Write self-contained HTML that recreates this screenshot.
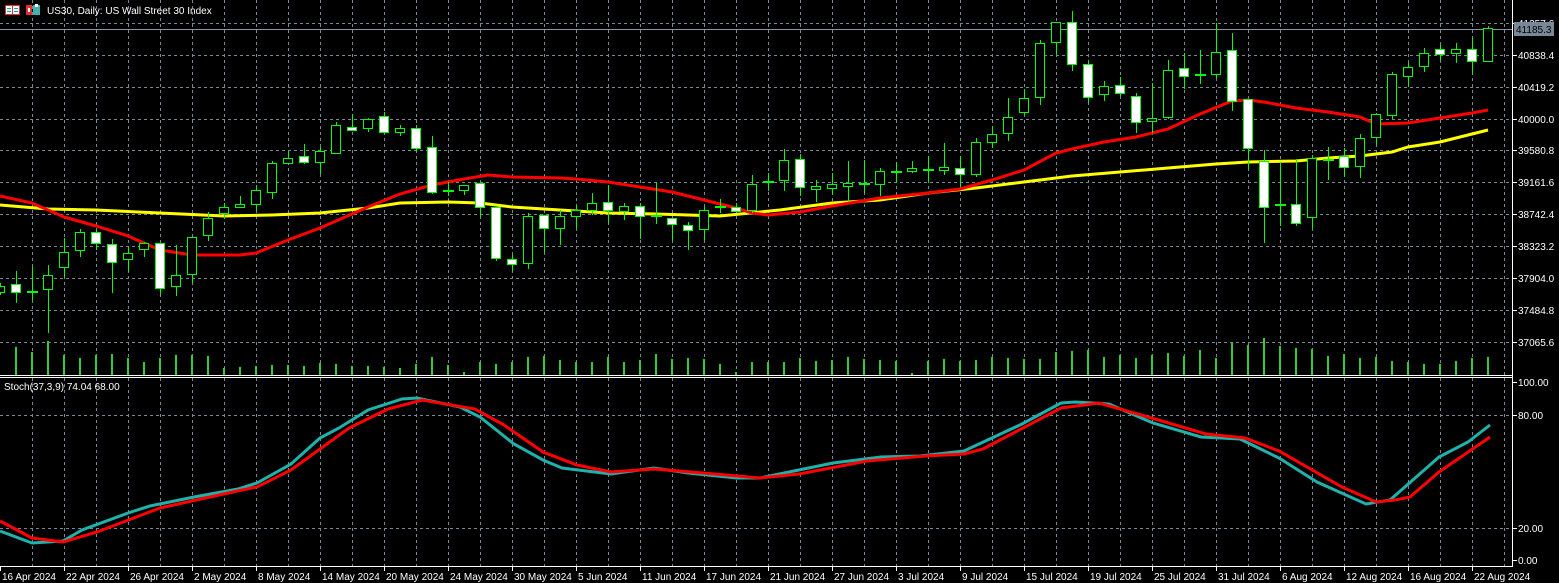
<!DOCTYPE html>
<html><head><meta charset="utf-8"><style>
html,body{margin:0;padding:0;background:#000;overflow:hidden}
svg{display:block}
text{font-family:"Liberation Sans","DejaVu Sans",sans-serif;font-size:10px;fill:#fff}
</style></head><body>
<svg width="1559" height="583" viewBox="0 0 1559 583" xmlns="http://www.w3.org/2000/svg" shape-rendering="crispEdges">
<defs>
<pattern id="vg" x="0" y="0" width="32" height="6" patternUnits="userSpaceOnUse"><rect x="0" y="0" width="1" height="3" fill="#778899"/></pattern>
</defs>
<rect width="1559" height="583" fill="#000"/>
<rect x="32" y="0" width="1474" height="375" fill="url(#vg)"/>
<rect x="32" y="378" width="1474" height="188" fill="url(#vg)"/>
<g stroke="#778899" stroke-width="1" stroke-dasharray="3,3">
<line x1="0" x2="1512" y1="23.5" y2="23.5"/>
<line x1="0" x2="1512" y1="55.5" y2="55.5"/>
<line x1="0" x2="1512" y1="87.5" y2="87.5"/>
<line x1="0" x2="1512" y1="119.5" y2="119.5"/>
<line x1="0" x2="1512" y1="150.5" y2="150.5"/>
<line x1="0" x2="1512" y1="182.5" y2="182.5"/>
<line x1="0" x2="1512" y1="214.5" y2="214.5"/>
<line x1="0" x2="1512" y1="246.5" y2="246.5"/>
<line x1="0" x2="1512" y1="278.5" y2="278.5"/>
<line x1="0" x2="1512" y1="310.5" y2="310.5"/>
<line x1="0" x2="1512" y1="342.5" y2="342.5"/>
<line x1="0" x2="1512" y1="415.5" y2="415.5"/>
<line x1="0" x2="1512" y1="528.5" y2="528.5"/>
</g>
<line x1="0" x2="1512" y1="29.5" y2="29.5" stroke="#8797a8"/>
<g stroke="#32cd32" stroke-width="2">
<path d="M16 347V375M32 352V375M48 341V375M64 355V375M80 358V375M96 355V375M112 354V375M128 358V375M144 362V375M160 358V375M176 355V375M192 355V375M208 356V375M224 368V375M240 367V375M256 366V375M272 365V375M288 365V375M304 366V375M320 363V375M336 364V375M352 366V375M368 366V375M384 367V375M400 368V375M416 364V375M432 357V375M448 365V375M464 372V375M480 362V375M496 364V375M512 362V375M528 357V375M544 356V375M560 360V375M576 362V375M592 362V375M608 357V375M624 362V375M640 360V375M656 354V375M672 359V375M688 358V375M704 359V375M720 364V375M736 372V375M752 362V375M768 362V375M784 362V375M800 358V375M816 361V375M832 360V375M848 357V375M864 359V375M880 360V375M896 361V375M912 373V375M928 361V375M944 359V375M960 361V375M976 360V375M992 357V375M1008 358V375M1024 359V375M1040 359V375M1056 352V375M1072 351V375M1088 350V375M1104 357V375M1120 355V375M1136 358V375M1152 355V375M1168 353V375M1184 356V375M1200 350V375M1216 358V375M1232 343V375M1248 345V375M1264 338V375M1280 346V375M1296 348V375M1312 349V375M1328 356V375M1344 354V375M1360 358V375M1376 357V375M1392 361V375M1408 362V375M1424 364V375M1440 364V375M1456 361V375M1472 358V375M1488 357V375"/>
</g>
<polyline fill="none" stroke="#ffff00" stroke-width="3" shape-rendering="auto" points="0,205 48,209 96,210 160,213 224,216 272,215 320,213 368,208 400,203 448,202 480,203 512,207 560,210 608,213 656,214 720,216 780,210 832,203 880,200 928,193 976,188 1024,182 1072,176 1120,172 1168,168 1216,164 1248,162 1296,161 1328,158 1360,156 1392,152 1408,147 1440,142 1472,134 1488,130"/>
<polyline fill="none" stroke="#ff0000" stroke-width="3" shape-rendering="auto" points="0,196 32,203 48,210 64,217 96,226 128,236 160,250 192,255 240,255 256,253 288,240 320,228 368,207 400,194 432,185 464,179 488,175 512,177 560,178 576,179 608,182 640,187 672,192 704,200 720,204 736,208 752,213 768,215 800,212 832,206 880,198 928,193 960,189 992,180 1024,170 1056,153 1072,149 1104,142 1136,137 1168,129 1200,114 1232,101 1248,100 1264,102 1296,108 1328,112 1360,117 1376,124 1408,123 1440,118 1472,113 1488,110"/>
<g stroke="#00ff00" stroke-width="1">
<path d="M0.5 283V295M16.5 271V303M32.5 267V301M48.5 265V333M64.5 238V277M80.5 229V257M96.5 229V250M112.5 239V293M128.5 247V272M144.5 242V257M160.5 243V295M176.5 245V296M192.5 237V283M208.5 212V241M224.5 203V219M240.5 196V208M256.5 185V211M272.5 161V199M288.5 151V165M304.5 144V164M320.5 147V174M336.5 122V154M352.5 114V130M368.5 118V132M384.5 112V134M400.5 125V136M416.5 125V152M432.5 136V194M448.5 182V196M464.5 185V195M480.5 183V217M496.5 207V261M512.5 255V271M528.5 213V269M544.5 215V253M560.5 210V245M576.5 205V229M592.5 193V215M608.5 185V223M624.5 203V220M640.5 203V239M656.5 183V224M672.5 218V241M688.5 222V250M704.5 207V240M720.5 199V213M736.5 203V213M752.5 175V213M768.5 173V191M784.5 149V191M800.5 154V196M816.5 180V202M832.5 173V195M848.5 161V202M864.5 160V193M880.5 168V196M896.5 162V183M912.5 161V173M928.5 156V183M944.5 143V175M960.5 156V187M976.5 138V177M992.5 126V148M1008.5 98V141M1024.5 89V115M1040.5 40V105M1056.5 22V55M1072.5 11V71M1088.5 61V103M1104.5 81V101M1120.5 77V96M1136.5 93V133M1152.5 83V133M1168.5 60V119M1184.5 53V89M1200.5 50V84M1216.5 23V78M1232.5 33V111M1248.5 99V169M1264.5 150V243M1280.5 162V226M1296.5 159V226M1312.5 155V229M1328.5 147V180M1344.5 148V177M1360.5 134V178M1376.5 113V145M1392.5 72V119M1408.5 63V87M1424.5 48V72M1440.5 45V61M1456.5 43V63M1472.5 38V74M1488.5 26V61"/>
<g fill="#000">
<rect x="-4.5" y="286.5" width="9" height="6"/>
<rect x="43.5" y="275.5" width="9" height="14"/>
<rect x="59.5" y="252.5" width="9" height="15"/>
<rect x="75.5" y="232.5" width="9" height="18"/>
<rect x="123.5" y="253.5" width="9" height="6"/>
<rect x="139.5" y="243.5" width="9" height="6"/>
<rect x="171.5" y="275.5" width="9" height="11"/>
<rect x="187.5" y="237.5" width="9" height="37"/>
<rect x="203.5" y="218.5" width="9" height="17"/>
<rect x="219.5" y="207.5" width="9" height="6"/>
<rect x="235.5" y="204.5" width="9" height="3"/>
<rect x="251.5" y="190.5" width="9" height="14"/>
<rect x="267.5" y="163.5" width="9" height="29"/>
<rect x="283.5" y="158.5" width="9" height="5"/>
<rect x="315.5" y="151.5" width="9" height="11"/>
<rect x="331.5" y="125.5" width="9" height="28"/>
<rect x="363.5" y="119.5" width="9" height="9"/>
<rect x="395.5" y="128.5" width="9" height="4"/>
<rect x="459.5" y="185.5" width="9" height="5"/>
<rect x="523.5" y="216.5" width="9" height="47"/>
<rect x="555.5" y="216.5" width="9" height="12"/>
<rect x="571.5" y="210.5" width="9" height="6"/>
<rect x="587.5" y="203.5" width="9" height="7"/>
<rect x="619.5" y="206.5" width="9" height="5"/>
<rect x="699.5" y="210.5" width="9" height="19"/>
<rect x="747.5" y="184.5" width="9" height="26"/>
<rect x="779.5" y="160.5" width="9" height="20"/>
<rect x="811.5" y="186.5" width="9" height="3"/>
<rect x="827.5" y="184.5" width="9" height="4"/>
<rect x="843.5" y="183.5" width="9" height="3"/>
<rect x="875.5" y="171.5" width="9" height="13"/>
<rect x="907.5" y="168.5" width="9" height="3"/>
<rect x="939.5" y="167.5" width="9" height="3"/>
<rect x="971.5" y="142.5" width="9" height="32"/>
<rect x="987.5" y="134.5" width="9" height="8"/>
<rect x="1003.5" y="117.5" width="9" height="16"/>
<rect x="1019.5" y="98.5" width="9" height="14"/>
<rect x="1035.5" y="43.5" width="9" height="54"/>
<rect x="1051.5" y="22.5" width="9" height="20"/>
<rect x="1099.5" y="86.5" width="9" height="8"/>
<rect x="1147.5" y="118.5" width="9" height="3"/>
<rect x="1163.5" y="70.5" width="9" height="47"/>
<rect x="1211.5" y="52.5" width="9" height="22"/>
<rect x="1307.5" y="158.5" width="9" height="59"/>
<rect x="1355.5" y="138.5" width="9" height="28"/>
<rect x="1371.5" y="114.5" width="9" height="23"/>
<rect x="1387.5" y="74.5" width="9" height="41"/>
<rect x="1403.5" y="67.5" width="9" height="9"/>
<rect x="1419.5" y="53.5" width="9" height="13"/>
<rect x="1451.5" y="49.5" width="9" height="4"/>
<rect x="1483.5" y="28.5" width="9" height="33"/>
</g>
<g fill="#fff">
<rect x="11.5" y="284.5" width="9" height="8"/>
<rect x="91.5" y="232.5" width="9" height="11"/>
<rect x="107.5" y="244.5" width="9" height="18"/>
<rect x="155.5" y="243.5" width="9" height="45"/>
<rect x="299.5" y="156.5" width="9" height="6"/>
<rect x="347.5" y="127.5" width="9" height="3"/>
<rect x="379.5" y="116.5" width="9" height="16"/>
<rect x="411.5" y="128.5" width="9" height="20"/>
<rect x="427.5" y="147.5" width="9" height="45"/>
<rect x="475.5" y="183.5" width="9" height="24"/>
<rect x="491.5" y="207.5" width="9" height="51"/>
<rect x="507.5" y="259.5" width="9" height="5"/>
<rect x="539.5" y="215.5" width="9" height="13"/>
<rect x="603.5" y="202.5" width="9" height="8"/>
<rect x="635.5" y="206.5" width="9" height="10"/>
<rect x="667.5" y="218.5" width="9" height="6"/>
<rect x="683.5" y="225.5" width="9" height="5"/>
<rect x="731.5" y="207.5" width="9" height="4"/>
<rect x="795.5" y="159.5" width="9" height="28"/>
<rect x="955.5" y="168.5" width="9" height="6"/>
<rect x="1067.5" y="22.5" width="9" height="42"/>
<rect x="1083.5" y="64.5" width="9" height="33"/>
<rect x="1115.5" y="85.5" width="9" height="8"/>
<rect x="1131.5" y="96.5" width="9" height="26"/>
<rect x="1179.5" y="68.5" width="9" height="8"/>
<rect x="1227.5" y="50.5" width="9" height="51"/>
<rect x="1243.5" y="99.5" width="9" height="49"/>
<rect x="1259.5" y="161.5" width="9" height="46"/>
<rect x="1291.5" y="204.5" width="9" height="19"/>
<rect x="1339.5" y="156.5" width="9" height="11"/>
<rect x="1435.5" y="49.5" width="9" height="5"/>
<rect x="1467.5" y="49.5" width="9" height="12"/>
</g>
</g>
<g fill="#00ff00">
<rect x="27" y="291" width="11" height="2"/>
<rect x="443" y="190" width="11" height="2"/>
<rect x="651" y="215" width="11" height="2"/>
<rect x="715" y="206" width="11" height="2"/>
<rect x="763" y="181" width="11" height="2"/>
<rect x="859" y="183" width="11" height="2"/>
<rect x="891" y="171" width="11" height="2"/>
<rect x="923" y="169" width="11" height="2"/>
<rect x="1195" y="74" width="11" height="2"/>
<rect x="1275" y="204" width="11" height="2"/>
<rect x="1323" y="159" width="11" height="2"/>
</g>
<polyline fill="none" stroke="#20b2aa" stroke-width="3" shape-rendering="auto" points="0,531 32,543 63,541 82,530 128,513 150,506 194,497 238,489 257,483 291,464 320,438 339,428 368,410 402,399 417,398 460,407 480,417 514,444 543,460 562,468 611,474 654,468 688,473 737,478 760,478 789,472 833,463 881,457 920,456 964,451 1022,424 1061,403 1075,402 1109,404 1153,423 1201,437 1240,439 1279,458 1317,482 1366,504 1390,500 1439,457 1468,442 1490,425"/>
<polyline fill="none" stroke="#ff0000" stroke-width="3" shape-rendering="auto" points="0,521 32,538 63,542 97,532 160,508 242,490 257,487 291,470 349,428 388,409 422,400 475,409 504,425 543,452 577,465 611,472 654,469 703,473 760,478 799,474 867,461 925,456 964,454 983,449 1061,408 1099,403 1148,417 1206,434 1245,438 1279,451 1342,487 1376,502 1395,500 1410,497 1439,472 1490,437"/>
<g stroke="#fff" stroke-width="1">
<line x1="0" x2="1513" y1="375.5" y2="375.5"/>
<line x1="0" x2="1513" y1="377.5" y2="377.5"/>
<line x1="0" x2="1513" y1="566.5" y2="566.5"/>
<line x1="1512.5" x2="1512.5" y1="0" y2="567"/>
<path d="M1513 23.5h4M1513 55.5h4M1513 87.5h4M1513 119.5h4M1513 150.5h4M1513 182.5h4M1513 214.5h4M1513 246.5h4M1513 278.5h4M1513 310.5h4M1513 342.5h4M1513 382.5h4M1513 415.5h4M1513 528.5h4M1513 560.5h4"/>
<path d="M0.5 567v4M64.5 567v4M128.5 567v4M192.5 567v4M256.5 567v4M320.5 567v4M384.5 567v4M448.5 567v4M512.5 567v4M576.5 567v4M640.5 567v4M704.5 567v4M768.5 567v4M832.5 567v4M896.5 567v4M960.5 567v4M1024.5 567v4M1088.5 567v4M1152.5 567v4M1216.5 567v4M1280.5 567v4M1344.5 567v4M1408.5 567v4M1472.5 567v4"/>
</g>
<g>
<text x="1518" y="27">41257.6</text>
<text x="1518" y="59">40838.4</text>
<text x="1518" y="91">40419.2</text>
<text x="1518" y="123">40000.0</text>
<text x="1518" y="154">39580.8</text>
<text x="1518" y="186">39161.6</text>
<text x="1518" y="218">38742.4</text>
<text x="1518" y="250">38323.2</text>
<text x="1518" y="282">37904.0</text>
<text x="1518" y="314">37484.8</text>
<text x="1518" y="346">37065.6</text>
<text x="1518" y="386">100.00</text>
<text x="1518" y="419">80.00</text>
<text x="1518" y="532">20.00</text>
<text x="1518" y="564">0.00</text>
</g>
<rect x="1514" y="22" width="40" height="14" fill="#778899"/>
<text x="1516" y="33" style="fill:#000">41185.3</text>
<g>
<text x="2" y="580">16 Apr 2024</text>
<text x="66" y="580">22 Apr 2024</text>
<text x="130" y="580">26 Apr 2024</text>
<text x="194" y="580">2 May 2024</text>
<text x="258" y="580">8 May 2024</text>
<text x="322" y="580">14 May 2024</text>
<text x="386" y="580">20 May 2024</text>
<text x="450" y="580">24 May 2024</text>
<text x="514" y="580">30 May 2024</text>
<text x="578" y="580">5 Jun 2024</text>
<text x="642" y="580">11 Jun 2024</text>
<text x="706" y="580">17 Jun 2024</text>
<text x="770" y="580">21 Jun 2024</text>
<text x="834" y="580">27 Jun 2024</text>
<text x="898" y="580">3 Jul 2024</text>
<text x="962" y="580">9 Jul 2024</text>
<text x="1026" y="580">15 Jul 2024</text>
<text x="1090" y="580">19 Jul 2024</text>
<text x="1154" y="580">25 Jul 2024</text>
<text x="1218" y="580">31 Jul 2024</text>
<text x="1282" y="580">6 Aug 2024</text>
<text x="1346" y="580">12 Aug 2024</text>
<text x="1410" y="580">16 Aug 2024</text>
<text x="1474" y="580">22 Aug 2024</text>
</g>
<rect x="5.5" y="5.5" width="14" height="9" fill="#fff" stroke="#e03030"/>
<path d="M12.5 5.5v9" stroke="#e03030"/>
<path d="M7 8.5h4M7 11.5h4M14 8.5h4M14 11.5h4" stroke="#20a0a0"/>
<rect x="26" y="5" width="6" height="10" fill="#e03030"/>
<rect x="33" y="5" width="7" height="10" fill="#40b0b0"/>
<rect x="28" y="8" width="2" height="4" fill="#fff"/>
<rect x="35" y="4" width="3" height="3" fill="#fff"/>
<text x="47" y="14">US30, Daily:  US Wall Street 30 Index</text>
<text x="4" y="390">Stoch(37,3,9) 74.04 68.00</text>
</svg>
</body></html>
